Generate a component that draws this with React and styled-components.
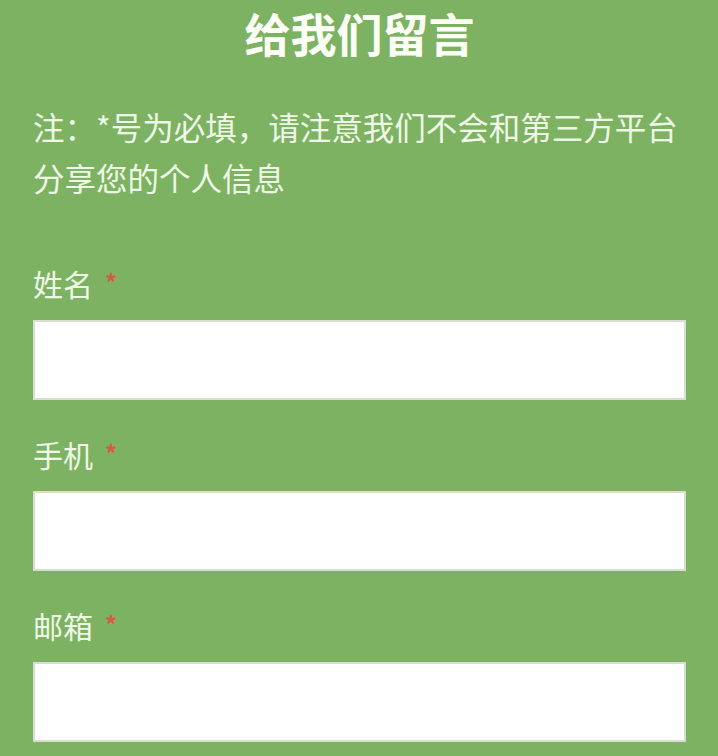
import React from "react";
import styled, { createGlobalStyle } from "styled-components";

const Global = createGlobalStyle`
  html, body {
    margin: 0;
    padding: 0;
    background: #7eb263;
  }
  * { box-sizing: border-box; }
`;

const Page = styled.div`
  width: 718px;
  height: 756px;
  overflow: hidden;
  background: #7eb263;
  padding: 0 32px 0 33px;
  font-family: "Noto Sans CJK SC", "Noto Sans", sans-serif;
  color: #eef8e6;
`;

const Title = styled.h1`
  margin: 0;
  font-size: 46px;
  line-height: 64px;
  font-weight: 700;
  text-align: center;
  color: #fbfff6;
`;

const Note = styled.p`
  margin: 37px 0 0;
  font-size: 31.5px;
  line-height: 51px;
  font-weight: 400;
`;

const Form = styled.form`
  margin-top: 60px;
  display: flex;
  flex-direction: column;
  gap: 34px;
`;

const Field = styled.div`
  display: flex;
  flex-direction: column;
  gap: 17px;
`;

const Label = styled.label`
  font-size: 30px;
  line-height: 40px;
  display: flex;
  align-items: center;
`;

const Star = styled.span`
  color: #d65a46;
  font-size: 24px;
  font-weight: 700;
  margin-left: 12px;
  font-family: "Noto Sans CJK SC", sans-serif;
  position: relative;
  top: -1px;
`;

const Input = styled.input`
  display: block;
  width: 100%;
  height: 80px;
  margin: 0;
  border: 2px solid #d9ddd2;
  background: #ffffff;
  outline: none;
  font-size: 28px;
  padding: 0 12px;
`;

const fields = ["姓名", "手机", "邮箱"];

export default function App() {
  return (
    <>
      <Global />
      <Page>
        <Title>给我们留言</Title>
        <Note>注：*号为必填，请注意我们不会和第三方平台分享您的个人信息</Note>
        <Form>
          {fields.map((f) => (
            <Field key={f}>
              <Label>
                {f}
                <Star>*</Star>
              </Label>
              <Input type="text" />
            </Field>
          ))}
        </Form>
      </Page>
    </>
  );
}
